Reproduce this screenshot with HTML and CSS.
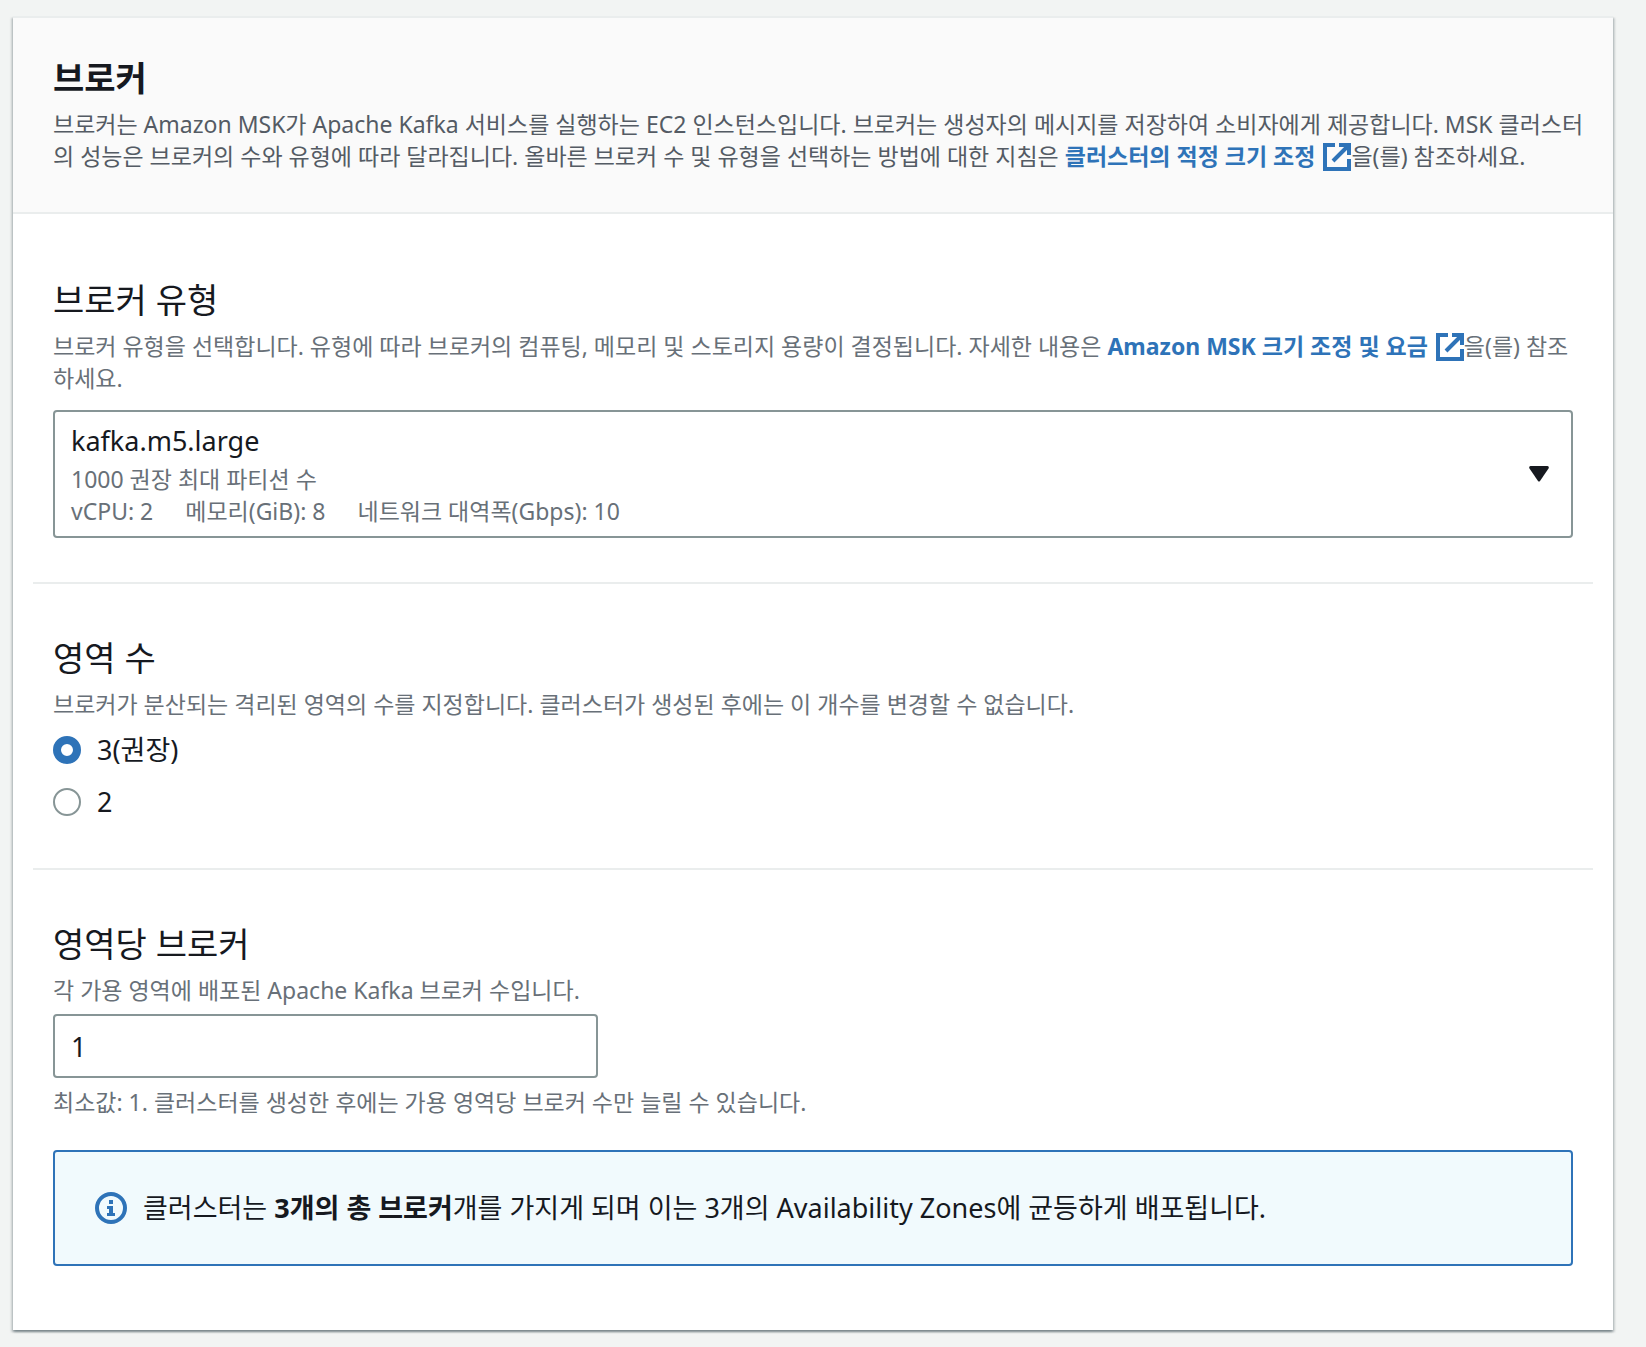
FILE: index.html
```html
<!DOCTYPE html>
<html lang="ko">
<head>
<meta charset="utf-8">
<meta name="viewport" content="width=device-width, initial-scale=1">
<title>브로커</title>
<link rel="stylesheet" href="styles.css">
</head>
<body>
<main class="card">
  <header class="card-header">
    <h1 class="card-title">브로커</h1>
    <p class="card-intro">브로커는 Amazon MSK가 Apache Kafka 서비스를 실행하는 EC2 인스턴스입니다. 브로커는 생성자의 메시지를 저장하여 소비자에게 제공합니다. MSK 클러스터의 성능은 브로커의 수와 유형에 따라 달라집니다. 올바른 브로커 수 및 유형을 선택하는 방법에 대한 지침은 <a class="link" href="#sizing">클러스터의 적정 크기 조정 <svg class="link-icon" viewBox="0 0 28 28" aria-hidden="true"><path d="M12 2H2v24h24V16M16 2h10v10M26 2 10 18"/></svg></a>을(를) 참조하세요.</p>
  </header>

  <form class="card-body">
    <section class="section">
      <h2 class="section-title" id="type-title">브로커 유형</h2>
      <p class="description">브로커 유형을 선택합니다. 유형에 따라 브로커의 컴퓨팅, 메모리 및 스토리지 용량이 결정됩니다. 자세한 내용은 <a class="link" href="#pricing">Amazon MSK 크기 조정 및 요금 <svg class="link-icon" viewBox="0 0 28 28" aria-hidden="true"><path d="M12 2H2v24h24V16M16 2h10v10M26 2 10 18"/></svg></a>을(를) 참조하세요.</p>
      <button class="select" type="button" aria-haspopup="listbox" aria-expanded="false" aria-describedby="type-title">
        <span class="select-text">
          <span class="select-value">kafka.m5.large</span>
          <span class="select-detail">1000 권장 최대 파티션 수</span>
          <span class="select-tags"><span>vCPU: 2</span><span>메모리(GiB): 8</span><span>네트워크 대역폭(Gbps): 10</span></span>
        </span>
        <svg class="caret" viewBox="0 0 20 16" aria-hidden="true"><path d="M1.500 0h17q2 .5 1 2.500l-8.500 12.500q-1 1-2 0L.5 2.500Q-.5.5 1.500 0z"/></svg>
      </button>
    </section>

    <section class="section" role="radiogroup" aria-labelledby="zones-title">
      <h2 class="section-title" id="zones-title">영역 수</h2>
      <p class="description">브로커가 분산되는 격리된 영역의 수를 지정합니다. 클러스터가 생성된 후에는 이 개수를 변경할 수 없습니다.</p>
      <div class="radios">
        <label class="radio-label"><input class="radio" type="radio" name="zones" value="3" checked>3(권장)</label>
        <label class="radio-label"><input class="radio" type="radio" name="zones" value="2">2</label>
      </div>
    </section>

    <section class="section">
      <h2 class="section-title"><label for="brokers">영역당 브로커</label></h2>
      <p class="description">각 가용 영역에 배포된 Apache Kafka 브로커 수입니다.</p>
      <input class="text-input" id="brokers" type="text" inputmode="numeric" value="1" aria-describedby="brokers-hint">
      <p class="hint" id="brokers-hint">최소값: 1. 클러스터를 생성한 후에는 가용 영역당 브로커 수만 늘릴 수 있습니다.</p>
      <div class="alert" role="status">
        <svg class="info-icon" viewBox="0 0 32 32" aria-hidden="true"><circle cx="16" cy="16" r="14"/><path d="M14 8h4v4h-4zM12 14h6v7h2v3h-8v-3h2v-4h-2z"/></svg>
        <p class="alert-text">클러스터는 <strong>3개의 총 브로커</strong>개를 가지게 되며 이는 3개의 Availability Zones에 균등하게 배포됩니다.</p>
      </div>
    </section>
  </form>
</main>
</body>
</html>
```
FILE: styles.css
```css
* {
  box-sizing: border-box;
}

body {
  margin: 0;
  padding: 16px 33px 17px 13px;
  background: #f2f4f3;
  color: #16191f;
  font-family: "Noto Sans", "Noto Sans CJK KR", sans-serif;
  font-size: 27px;
  line-height: 36px;
}

h1,
h2,
p {
  margin: 0;
}

.card {
  background: #fff;
  border-top: 2px solid #eaeded;
  box-shadow:
    0 2px 2px 0 rgba(0, 28, 36, 0.3),
    2px 2px 2px 0 rgba(0, 28, 36, 0.15),
    -2px 2px 2px 0 rgba(0, 28, 36, 0.15);
}

.card-header {
  padding: 38px 16px 40px 40px;
  background: #fafafa;
  border-bottom: 2px solid #eaeded;
}

.card-title {
  margin-bottom: 8px;
  font-size: 34px;
  font-weight: 700;
  line-height: 44px;
}

.card-intro,
.description,
.hint {
  font-size: 23px;
  line-height: 32px;
}

.card-intro {
  color: #545b64;
}

.description,
.hint {
  color: #687078;
}

.description {
  margin-right: -8px;
}

.link {
  color: #2e73b8;
  font-weight: 700;
  text-decoration: none;
}

.link-icon {
  width: 28px;
  height: 28px;
  margin-left: 2px;
  vertical-align: -6px;
  fill: none;
  stroke: currentColor;
  stroke-width: 4;
}

.card-body {
  padding: 12px 20px 64px;
}

.section {
  padding: 52px 20px 48px;
}

.section:first-child {
  padding-bottom: 44px;
}

.section:last-child {
  padding-bottom: 0;
}

.section + .section {
  border-top: 2px solid #eaeded;
}

.section-title {
  margin-bottom: 8px;
  font-size: 34px;
  font-weight: 400;
  line-height: 44px;
}

.select {
  display: flex;
  align-items: center;
  justify-content: space-between;
  width: 100%;
  margin-top: 16px;
  padding: 9px 22px 9px 16px;
  border: 2px solid #879596;
  border-radius: 4px;
  background: #fff;
  color: inherit;
  font: inherit;
  text-align: left;
}

.select-text {
  display: flex;
  flex-direction: column;
  padding-top: 2px;
}

.select-value {
  margin-bottom: 4px;
}

.select-detail,
.select-tags {
  color: #687078;
  font-size: 23px;
  line-height: 32px;
}

.select-tags {
  display: flex;
  flex-wrap: wrap;
  column-gap: 32px;
}

.caret {
  width: 20px;
  height: 16px;
  fill: #16191f;
}

.radios {
  display: flex;
  flex-direction: column;
  gap: 16px;
  margin-top: 12px;
}

.radio-label {
  display: flex;
  align-items: center;
  gap: 16px;
}

.radio {
  width: 28px;
  height: 28px;
  margin: 0;
  appearance: none;
  border: 2px solid #879596;
  border-radius: 50%;
  background: #fff;
}

.radio:checked {
  border: 8px solid #2e73b8;
}

.text-input {
  display: block;
  width: 100%;
  max-width: 545px;
  height: 64px;
  margin: 8px 0;
  padding: 0 16px;
  border: 2px solid #879596;
  border-radius: 4px;
  background: #fff;
  color: inherit;
  font: inherit;
}

.alert {
  display: flex;
  align-items: center;
  gap: 16px;
  margin-top: 32px;
  padding: 38px 40px;
  border: 2px solid #2e73b8;
  border-radius: 4px;
  background: #f1fafd;
}

.info-icon {
  flex: none;
  width: 32px;
  height: 32px;
  fill: #2e73b8;
}

.info-icon circle {
  fill: none;
  stroke: #2e73b8;
  stroke-width: 4;
}
```
